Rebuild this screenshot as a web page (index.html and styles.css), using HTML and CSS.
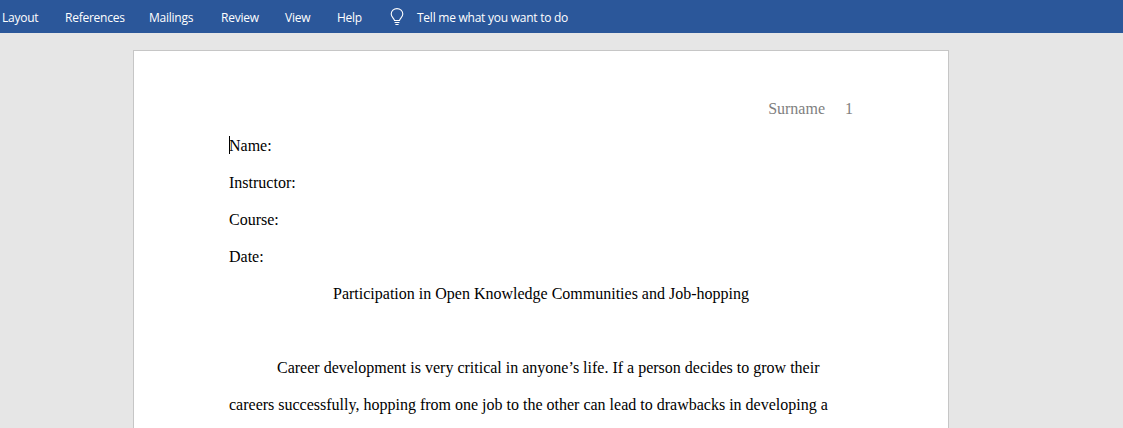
FILE: index.html
```html
<!DOCTYPE html>
<html lang="en">
<head>
<meta charset="utf-8">
<title>Document</title>
<link rel="stylesheet" href="styles.css">
</head>
<body>
<nav class="ribbon">
  <span class="tab tab-layout">Layout</span>
  <span class="tab tab-references">References</span>
  <span class="tab tab-mailings">Mailings</span>
  <span class="tab tab-review">Review</span>
  <span class="tab tab-view">View</span>
  <span class="tab tab-help">Help</span>
  <svg class="bulb" width="14" height="18" viewBox="0 0 14 18" fill="none" stroke="#fff" stroke-width="1.1">
    <path d="M4.5 12.5C4.3 10.5 1.2 9 1.2 5.9a5.8 5.3 0 0 1 11.6 0c0 3.1-3.1 4.6-3.3 6.6z"/>
    <path d="M4.6 14.5h4.8M5.4 16.5h3.2"/>
  </svg>
  <span class="tell">Tell me what you want to do</span>
</nav>
<main class="canvas">
  <article class="page">
    <header class="page-header"><span>Surname</span><span class="page-num">1</span></header>
    <p class="line"><span class="caret"></span>Name:</p>
    <p class="line">Instructor:</p>
    <p class="line">Course:</p>
    <p class="line">Date:</p>
    <p class="line title">Participation in Open Knowledge Communities and Job-hopping</p>
    <p class="line">&nbsp;</p>
    <p class="line indent">Career development is very critical in anyone’s life. If a person decides to grow their</p>
    <p class="line">careers successfully, hopping from one job to the other can lead to drawbacks in developing a</p>
  </article>
</main>
</body>
</html>
```
FILE: styles.css
```css
html, body {
  margin: 0;
  height: 428px;
  overflow: hidden;
  background: #e6e6e6;
}
.ribbon {
  height: 33px;
  background: #2b579a;
  display: flex;
  align-items: center;
  color: #fff;
  font: 12px/16px "Open Sans", "Liberation Sans", sans-serif;
  letter-spacing: -0.25px;
  padding: 3px 0 0 2px;
  box-sizing: border-box;
}
.tab { flex: none; white-space: nowrap; }
.tab-layout { width: 63px; }
.tab-references { width: 84px; }
.tab-mailings { width: 72px; }
.tab-review { width: 64px; }
.tab-view { width: 52px; }
.tab-help { width: 53px; }
.bulb { flex: none; margin: -3px 13px 0 0; }
.tell { white-space: nowrap; }
.canvas {
  display: flex;
  padding: 17px 0 0 133px;
  height: 378px;
  overflow: hidden;
}
.page {
  width: 816px;
  height: 500px;
  flex: none;
  background: #fff;
  border: 1px solid #c6c6c6;
  padding: 0 95px;
  box-sizing: border-box;
  font: 16px/37px "Liberation Serif", serif;
  color: #000;
}
.page-header {
  display: flex;
  justify-content: flex-end;
  gap: 20px;
  color: #7f7f7f;
  height: 37px;
  padding-top: 39px;
}
.line {
  margin: 0;
  height: 37px;
  white-space: nowrap;
  position: relative;
}
.title { text-align: center; }
.indent { text-indent: 48px; }
.caret {
  position: absolute;
  left: 0;
  top: 9px;
  width: 1px;
  height: 18px;
  background: #000;
}
```
